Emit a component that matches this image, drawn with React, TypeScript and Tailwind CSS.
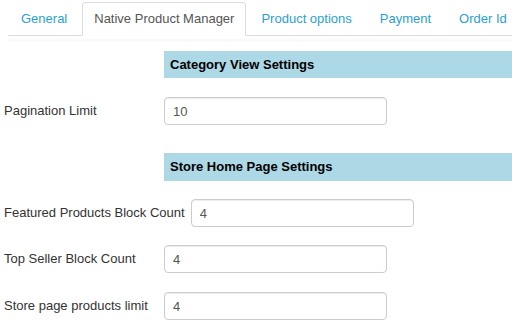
import React from "react";

const font = { fontFamily: '"Liberation Sans", Arial, sans-serif' };

function Field({ label, value, inputLeft, mt }: { label: string; value: string; inputLeft: string; mt: string }) {
  return (
    <div className={`flex items-center ${mt}`}>
      <div className={`${inputLeft} pl-[4px] text-[13px] text-[#333] whitespace-nowrap shrink-0`}>{label}</div>
      <input
        readOnly
        value={value}
        className="h-[28px] w-[223px] rounded-[4px] border border-[#ccc] bg-white px-[8px] text-[13px] text-[#555] shadow-[inset_0_1px_1px_rgba(0,0,0,0.075)] outline-none"
        style={font}
      />
    </div>
  );
}

export default function App() {
  const tabs = ["General", "Native Product Manager", "Product options", "Payment", "Order Id"];
  return (
    <div className="w-[512px] h-[325px] overflow-hidden bg-white" style={font}>
      <div className="pt-[2px] pl-[8px]">
        <ul className="flex border-b border-[#ddd] h-[34px] whitespace-nowrap">
          {tabs.map((t, i) =>
            i === 1 ? (
              <li
                key={t}
                className="mr-[2px] -mb-px h-[34px] rounded-t-[4px] border border-[#ddd] border-b-white bg-white px-[11px] flex items-center text-[13px] text-[#555]"
              >
                {t}
              </li>
            ) : (
              <li key={t} className="mr-[2px] h-[33px] px-[13px] flex items-center text-[13px] text-[#2a9fd6]">
                {t}
              </li>
            )
          )}
        </ul>
        <div className="h-[3px] mt-[3px] bg-[#fafafa]" />
      </div>
      <div className="ml-[164px] mt-[9px] h-[27px] bg-[#add8e6] pl-[6px] flex items-center text-[13px] font-bold text-black">
        Category View Settings
      </div>
      <Field label="Pagination Limit" value="10" inputLeft="w-[164px]" mt="mt-[19px]" />
      <div className="ml-[164px] mt-[28px] h-[28px] bg-[#add8e6] pl-[6px] flex items-center text-[13px] font-bold text-black">
        Store Home Page Settings
      </div>
      <Field label="Featured Products Block Count" value="4" inputLeft="pr-[6px]" mt="mt-[18px]" />
      <Field label="Top Seller Block Count" value="4" inputLeft="w-[164px]" mt="mt-[18px]" />
      <Field label="Store page products limit" value="4" inputLeft="w-[164px]" mt="mt-[19px]" />
    </div>
  );
}
